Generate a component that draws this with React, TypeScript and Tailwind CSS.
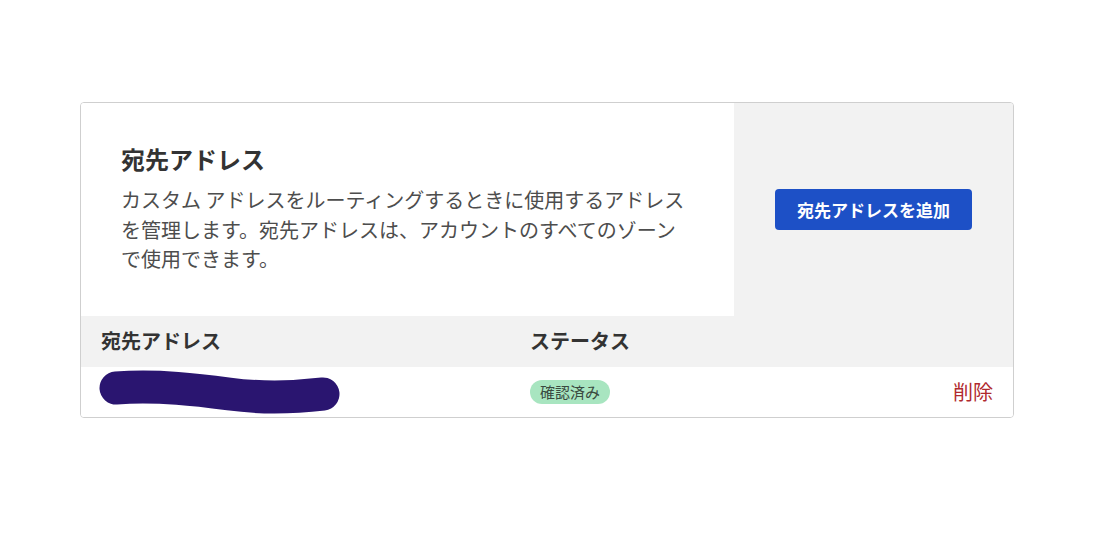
import React from "react"

const font = { fontFamily: '"Noto Sans CJK JP", "Noto Sans", sans-serif' }

function Redacted() {
  return (
    <svg width="244" height="46" viewBox="0 0 244 46" className="-ml-[2px]">
      <path
        d="M17 19 C 60 16, 100 21, 130 25 S 190 29, 224 25"
        fill="none"
        stroke="#2a1570"
        strokeWidth="33"
        strokeLinecap="round"
      />
    </svg>
  )
}

export default function App() {
  return (
    <div className="w-[1100px] h-[550px] bg-white pt-[102px] pl-[80px]" style={font}>
      <div className="w-[934px] border border-[#cfcfcf] rounded-[4px] overflow-hidden">
        <div className="flex">
          <div className="w-[653px] bg-white pl-[40px] pr-[40px] pt-[40px] pb-[42px]">
            <h1 className="text-[24px] leading-[32px] font-bold text-[#333]">宛先アドレス</h1>
            <p className="mt-[10px] text-[20px] leading-[29.5px] text-[#4d4d4d]">
              カスタム アドレスをルーティングするときに使用するアドレスを管理します。宛先アドレスは、アカウントのすべてのゾーンで使用できます。
            </p>
          </div>
          <div className="flex-1 bg-[#f2f2f2] flex items-center justify-center">
            <button className="h-[41px] px-[22px] rounded-[4px] bg-[#1d50c6] text-white text-[17px] font-semibold">
              宛先アドレスを追加
            </button>
          </div>
        </div>
        <div className="grid grid-cols-[429px_1fr_auto] items-center h-[51px] px-[20px] bg-[#f2f2f2] text-[20px] font-bold text-[#333]">
          <span>宛先アドレス</span>
          <span>ステータス</span>
          <span />
        </div>
        <div className="grid grid-cols-[429px_1fr_auto] items-center h-[50px] px-[20px] bg-white">
          <Redacted />
          <div>
            <span className="inline-block h-[24px] leading-[24px] px-[10px] rounded-full bg-[#a8e5c0] text-[15px] text-[#3a4a40]">
              確認済み
            </span>
          </div>
          <span className="text-[20px] text-[#b02a2e]">削除</span>
        </div>
      </div>
    </div>
  )
}
